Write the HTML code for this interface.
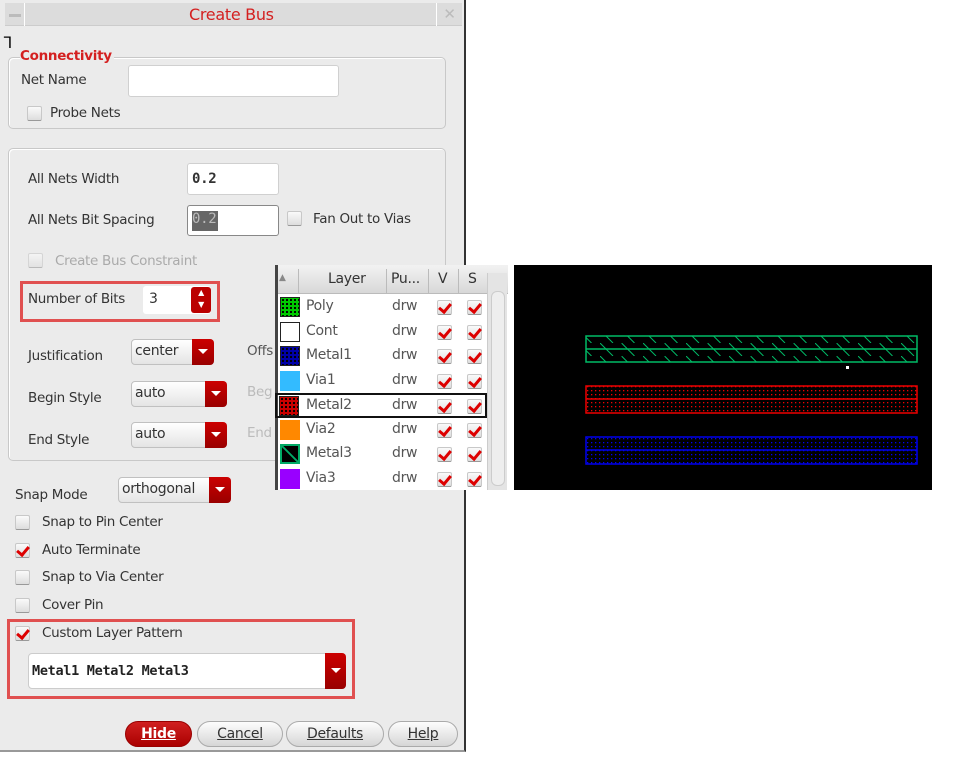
<!DOCTYPE html>
<html><head><meta charset="utf-8"><style>
*{margin:0;padding:0;box-sizing:border-box}
body{width:960px;height:759px;background:#fff;position:relative;overflow:hidden;font-family:"DejaVu Sans","Liberation Sans",sans-serif;font-size:13.5px;color:#333;letter-spacing:-0.3px}
.a{position:absolute}
#dlg{left:0;top:0;width:466px;height:752px;background:#ebebeb;border-right:2px solid #333;border-bottom:2px solid #999}
.tb{left:5px;top:3px;width:457px;height:23px;background:#dcdcdc;border-bottom:1px solid #ccc}
.grp{border:1px solid #c8c8c8;border-radius:5px;box-shadow:inset 1px 1px 0 #fff}
.inp{background:#fff;border:1px solid #d0d0d0;border-radius:3px}
.cb{width:15px;height:15px;background:linear-gradient(#fafafa,#ddd);border:1px solid #c8c8c8;border-bottom-color:#999;border-radius:2px}
.chk::after{content:"";position:absolute;left:3px;top:0px;width:5px;height:9px;border:solid #d00;border-width:0 3px 3px 0;transform:rotate(40deg)}
.lbl{white-space:nowrap}
.dd{height:26px;background:linear-gradient(#fff,#e4e4e4);border:1px solid #c0c0c0;border-radius:4px;padding-left:3px;line-height:22px;font-size:14px}
.dd i{position:absolute;right:-1px;top:-1px;width:22px;height:26px;background:linear-gradient(#c00,#900);border-radius:0 4px 4px 0}
.dd i::after{content:"";position:absolute;left:6px;top:10px;border:5px solid transparent;border-top:5px solid #fff;border-bottom:0}
.btn{height:26px;border:1px solid #aaa;border-radius:13px;background:linear-gradient(#fdfdfd,#d6d6d6);text-align:center;line-height:24px;font-size:14px;text-decoration:underline;}
.red{border:3px solid #e05050}
#tbl{left:275px;top:265px;width:233px;height:225px;background:#fff;border-left:3px solid #444}
.row{position:absolute;left:0;width:208px;height:24px;font-size:14px;color:#555}
.sw{position:absolute;left:2px;top:2px;width:20px;height:20px;border:1px solid #222}
.row .n{position:absolute;left:28px;top:3px}
.row .p{position:absolute;left:114px;top:3px}
.row .cb{position:absolute;top:5px}
</style></head><body>
<div id="dlg" class="a">
 <div class="a tb"></div>
 <div class="a" style="left:5px;top:3px;width:20px;height:23px;border-right:1px solid #fff"><div class="a" style="left:4px;top:11px;width:12px;height:3px;background:#bbb"></div></div>
 <div class="a" style="left:436px;top:3px;width:26px;height:23px;border-left:1px solid #fff;color:#bbb;text-align:center;font-size:15px;line-height:23px">✕</div>
 <div class="a lbl" style="left:189px;top:5px;color:#d42020;font-size:16px">Create Bus</div>
 <div class="a" style="left:3px;top:34px;font-size:15px;color:#000">ᒣ</div>

 <div class="a grp" style="left:8px;top:57px;width:438px;height:72px"></div>
 <div class="a lbl" style="left:20px;top:48px;color:#d42020;font-weight:bold;font-size:13.5px;background:#ebebeb;padding-right:2px">Connectivity</div>
 <div class="a lbl" style="left:21px;top:72px">Net Name</div>
 <div class="a inp" style="left:128px;top:65px;width:211px;height:32px"></div>
 <div class="a cb" style="left:27px;top:106px"></div>
 <div class="a lbl" style="left:50px;top:105px">Probe Nets</div>

 <div class="a grp" style="left:8px;top:148px;width:438px;height:313px"></div>
 <div class="a lbl" style="left:28px;top:171px">All Nets Width</div>
 <div class="a inp" style="left:187px;top:163px;width:92px;height:32px;font-family:'DejaVu Sans Mono',monospace;font-weight:bold;font-size:14px;padding:7px 0 0 4px">0.2</div>
 <div class="a lbl" style="left:28px;top:212px">All Nets Bit Spacing</div>
 <div class="a inp" style="left:187px;top:205px;width:92px;height:31px;border:1px solid #888"><span class="a" style="left:4px;top:5px;width:26px;height:20px;background:#666;color:#bbb;font-family:'DejaVu Sans Mono',monospace;font-size:14px">0.2</span></div>
 <div class="a cb" style="left:287px;top:211px"></div>
 <div class="a lbl" style="left:313px;top:211px">Fan Out to Vias</div>
 <div class="a cb" style="left:28px;top:253px;opacity:.6"></div>
 <div class="a lbl" style="left:55px;top:253px;color:#aaa">Create Bus Constraint</div>

 <div class="a red" style="left:20px;top:281px;width:200px;height:41px"></div>
 <div class="a lbl" style="left:28px;top:291px">Number of Bits</div>
 <div class="a inp" style="left:143px;top:286px;width:68px;height:28px;border:none;padding:5px 0 0 6px;font-size:14px">3</div>
 <div class="a" style="left:191px;top:287px;width:20px;height:26px;background:#b00;border-radius:3px;color:#fff;font-size:8px;text-align:center;line-height:12px">▲<br>▼</div>

 <div class="a lbl" style="left:28px;top:348px">Justification</div>
 <div class="a dd" style="left:131px;top:339px;width:83px">center<i></i></div>
 <div class="a lbl" style="left:247px;top:343px;color:#555">Offs</div>
 <div class="a lbl" style="left:28px;top:390px">Begin Style</div>
 <div class="a dd" style="left:131px;top:381px;width:96px">auto<i></i></div>
 <div class="a lbl" style="left:247px;top:384px;color:#bbb">Beg</div>
 <div class="a lbl" style="left:28px;top:432px">End Style</div>
 <div class="a dd" style="left:131px;top:422px;width:96px">auto<i></i></div>
 <div class="a lbl" style="left:247px;top:425px;color:#bbb">End</div>

 <div class="a lbl" style="left:15px;top:487px">Snap Mode</div>
 <div class="a dd" style="left:118px;top:477px;width:113px">orthogonal<i></i></div>
 <div class="a cb" style="left:15px;top:515px"></div><div class="a lbl" style="left:42px;top:514px">Snap to Pin Center</div>
 <div class="a cb chk" style="left:15px;top:543px"></div><div class="a lbl" style="left:42px;top:542px">Auto Terminate</div>
 <div class="a cb" style="left:15px;top:570px"></div><div class="a lbl" style="left:42px;top:569px">Snap to Via Center</div>
 <div class="a cb" style="left:15px;top:598px"></div><div class="a lbl" style="left:42px;top:597px">Cover Pin</div>
 <div class="a red" style="left:7px;top:619px;width:348px;height:80px"></div>
 <div class="a cb chk" style="left:15px;top:626px"></div><div class="a lbl" style="left:42px;top:625px">Custom Layer Pattern</div>
 <div class="a" style="left:28px;top:653px;width:318px;height:36px;background:#fff;border:1px solid #ccc;border-radius:4px;font-family:'DejaVu Sans Mono',monospace;font-weight:bold;font-size:13.5px;color:#222;padding:9px 0 0 3px">Metal1 Metal2 Metal3<div class="a" style="right:-1px;top:-1px;width:21px;height:36px;background:linear-gradient(#c00,#900);border-radius:0 4px 4px 0"><div class="a" style="left:6px;top:15px;border:5px solid transparent;border-top:5px solid #fff;border-bottom:0"></div></div></div>

 <div class="a btn" style="left:125px;top:721px;width:67px;background:linear-gradient(#d02020,#a00);color:#fff;font-weight:bold;border-color:#900">Hide</div>
 <div class="a btn" style="left:197px;top:721px;width:86px">Cancel</div>
 <div class="a btn" style="left:286px;top:721px;width:98px">Defaults</div>
 <div class="a btn" style="left:388px;top:721px;width:70px">Help</div>
</div>

<div id="tbl" class="a">
 <div class="a" style="left:0;top:0;width:230px;height:29px;background:linear-gradient(#f2f2f2,#d8d8d8);border-bottom:1px solid #bbb;font-size:14px;color:#444"></div>
 <div class="a" style="left:1px;top:8px;color:#888;font-size:9px">▲</div>
 <div class="a" style="left:20px;top:4px;width:1px;height:24px;background:#bbb"></div>
 <div class="a lbl" style="left:50px;top:6px;font-size:14px">Layer</div>
 <div class="a" style="left:108px;top:4px;width:1px;height:24px;background:#bbb"></div>
 <div class="a lbl" style="left:113px;top:6px;font-size:14px">Pu...</div>
 <div class="a" style="left:150px;top:4px;width:1px;height:24px;background:#bbb"></div>
 <div class="a lbl" style="left:160px;top:6px;font-size:14px">V</div>
 <div class="a" style="left:180px;top:4px;width:1px;height:24px;background:#bbb"></div>
 <div class="a lbl" style="left:190px;top:6px;font-size:14px">S</div>
 <div class="a" style="left:209px;top:8px;width:20px;height:217px;background:#e4e4e4;border-left:1px solid #ccc"><div class="a" style="left:3px;top:18px;width:14px;height:195px;background:#eee;border:1px solid #ccc;border-radius:6px"></div></div>

 <div class="row" style="top:30px"><div class="sw" style="background:#0c0;background-image:radial-gradient(#000 1px,transparent 1.3px);background-size:4px 4px"></div><span class="n">Poly</span><span class="p">drw</span><div class="cb chk" style="left:159px"></div><div class="cb chk" style="left:189px"></div></div>
 <div class="row" style="top:55px"><div class="sw" style="background:#fff"></div><span class="n">Cont</span><span class="p">drw</span><div class="cb chk" style="left:159px"></div><div class="cb chk" style="left:189px"></div></div>
 <div class="row" style="top:79px"><div class="sw" style="background:#00a;background-image:radial-gradient(#000 1px,transparent 1.3px);background-size:4px 4px"></div><span class="n">Metal1</span><span class="p">drw</span><div class="cb chk" style="left:159px"></div><div class="cb chk" style="left:189px"></div></div>
 <div class="row" style="top:104px"><div class="sw" style="background:#3bf;border-color:#3bf"></div><span class="n">Via1</span><span class="p">drw</span><div class="cb chk" style="left:159px"></div><div class="cb chk" style="left:189px"></div></div>
 <div class="row" style="top:128px;width:212px;height:25px;border:2px solid #111;left:-3px"><div class="sw" style="left:2px;top:1px;background:#c00;background-image:radial-gradient(#000 1px,transparent 1.3px);background-size:4px 4px"></div><span class="n" style="left:29px;top:2px">Metal2</span><span class="p" style="left:115px;top:2px">drw</span><div class="cb chk" style="left:160px;top:4px"></div><div class="cb chk" style="left:190px;top:4px"></div></div>
 <div class="row" style="top:153px"><div class="sw" style="background:#f80;border-color:#f80"></div><span class="n">Via2</span><span class="p">drw</span><div class="cb chk" style="left:159px"></div><div class="cb chk" style="left:189px"></div></div>
 <div class="row" style="top:177px"><div class="sw" style="background:linear-gradient(45deg,#000 45%,#0a6 47%,#0a6 53%,#000 55%);border:2px solid #0a6"></div><span class="n">Metal3</span><span class="p">drw</span><div class="cb chk" style="left:159px"></div><div class="cb chk" style="left:189px"></div></div>
 <div class="row" style="top:202px"><div class="sw" style="background:#90f;border-color:#90f"></div><span class="n">Via3</span><span class="p">drw</span><div class="cb chk" style="left:159px"></div><div class="cb chk" style="left:189px"></div></div>
</div>

<div class="a" style="left:514px;top:265px;width:418px;height:225px;background:#000">
 <svg width="418" height="225" style="position:absolute;left:0;top:0">
  <defs>
   <pattern id="rd" width="4" height="4" patternUnits="userSpaceOnUse"><rect x="1" y="1" width="1.3" height="1.3" fill="#e00"/></pattern>
   <pattern id="bd" width="4" height="4" patternUnits="userSpaceOnUse"><rect x="1" y="1" width="1.3" height="1.3" fill="#00e"/></pattern>
   <pattern id="gh" width="21.5" height="13" patternUnits="userSpaceOnUse"><line x1="0" y1="0" x2="13" y2="13" stroke="#0b6" stroke-width="1"/></pattern>
  </defs>
  <rect x="72" y="71" width="331" height="26" fill="url(#gh)" stroke="#0b6" stroke-width="1.5"/>
  <line x1="72" y1="84" x2="403" y2="84" stroke="#0b6" stroke-width="1.5"/>
  <rect x="72" y="121" width="331" height="27" fill="url(#rd)" stroke="#e00" stroke-width="1.5"/>
  <line x1="72" y1="134" x2="403" y2="134" stroke="#e00" stroke-width="1.5"/>
  <rect x="72" y="172" width="331" height="27" fill="url(#bd)" stroke="#00e" stroke-width="1.5"/>
  <line x1="72" y1="185" x2="403" y2="185" stroke="#00e" stroke-width="1.5"/>
  <rect x="332" y="101" width="3" height="3" fill="#fff"/>
 </svg>
</div>
</body></html>
